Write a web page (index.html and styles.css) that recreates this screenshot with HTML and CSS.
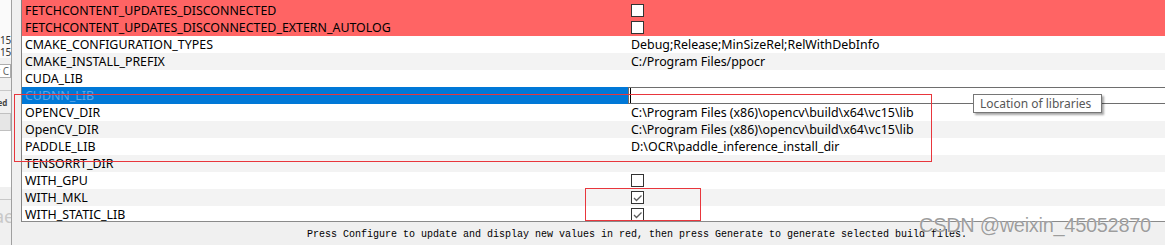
FILE: index.html
```html
<!DOCTYPE html>
<html lang="en">
<head>
  <meta charset="UTF-8">
  <title>CMake cache</title>
  <link rel="stylesheet" href="styles.css">
</head>
<body>
<div class="window">
  <div class="side">
    <div class="frag light">a</div>
    <div class="frag spacer"></div>
    <div class="frag dark">vc15</div>
    <div class="frag dark">vc15</div>
    <div class="frag boxed">or C</div>
    <div class="frag rule"></div>
    <div class="frag small">ted</div>
    <div class="frag button"></div>
    <div class="frag blank"></div>
    <div class="frag rule"></div>
    <div class="frag ghost">ae</div>
  </div>
  <div class="main">
    <div class="cache">
      <div class="row red stub"></div>
      <div class="row red"><span class="name">FETCHCONTENT_UPDATES_DISCONNECTED</span><span class="value"><i class="check"></i></span></div>
      <div class="row red"><span class="name">FETCHCONTENT_UPDATES_DISCONNECTED_EXTERN_AUTOLOG</span><span class="value"><i class="check"></i></span></div>
      <div class="row"><span class="name">CMAKE_CONFIGURATION_TYPES</span><span class="value">Debug;Release;MinSizeRel;RelWithDebInfo</span></div>
      <div class="row alt"><span class="name">CMAKE_INSTALL_PREFIX</span><span class="value">C:/Program Files/ppocr</span></div>
      <div class="row"><span class="name">CUDA_LIB</span><span class="value"></span></div>
      <div class="row selected"><span class="name">CUDNN_LIB</span><span class="value"><span class="edit"><i class="caret"></i></span></span></div>
      <div class="row"><span class="name">OPENCV_DIR</span><span class="value">C:\Program Files (x86)\opencv\build\x64\vc15\lib</span></div>
      <div class="row alt"><span class="name">OpenCV_DIR</span><span class="value">C:\Program Files (x86)\opencv\build\x64\vc15\lib</span></div>
      <div class="row"><span class="name">PADDLE_LIB</span><span class="value">D:\OCR\paddle_inference_install_dir</span></div>
      <div class="row alt"><span class="name">TENSORRT_DIR</span><span class="value"></span></div>
      <div class="row"><span class="name">WITH_GPU</span><span class="value"><i class="check"></i></span></div>
      <div class="row alt"><span class="name">WITH_MKL</span><span class="value"><i class="check on"><svg width="11" height="11" viewBox="0 0 11 11"><polyline points="2,6 4.5,8.5 9.5,3.5" fill="none" stroke="#5c5c5c" stroke-width="1.3"/></svg></i></span></div>
      <div class="row"><span class="name">WITH_STATIC_LIB</span><span class="value"><i class="check on"><svg width="11" height="11" viewBox="0 0 11 11"><polyline points="2,6 4.5,8.5 9.5,3.5" fill="none" stroke="#5c5c5c" stroke-width="1.3"/></svg></i></span></div>
    </div>
    <div class="status">Press Configure to update and display new values in red, then press Generate to generate selected build files.</div>
  </div>
</div>

<div class="tip">Location of libraries</div>
<div class="mark mark-paths"></div>
<div class="mark mark-bools"></div>
<div class="watermark">CSDN @weixin_45052870</div>
</body>
</html>
```

FILE: styles.css
```css
body {
  margin: 0;
  background: #f0f0f0;
  font-family: "Noto Sans", "Liberation Sans", sans-serif;
  font-size: 12.4px;
  color: #000;
  width: 1165px;
  height: 245px;
  overflow: hidden;
  position: relative;
}
.window {
  display: flex;
  height: 245px;
}
.side {
  width: 11px;
  flex: none;
  border-right: 1px solid #a0a0a0;
  overflow: hidden;
  background: #f0f0f0;
}
.frag {
  white-space: nowrap;
  font-size: 10px;
  line-height: 12px;
  height: 12px;
  text-indent: -10px;
  color: #333;
}
.frag.light {
  color: #999;
  background: #fafafa;
  height: 18px;
}
.frag.spacer {
  height: 16px;
  background: #fafafa;
}
.frag.dark {
  background: #fafafa;
}
.frag.boxed {
  margin-top: 6px;
  border: 1px solid #adadad;
  border-left: none;
  background: #fff;
  color: #666;
}
.frag.rule {
  height: 0;
  border-top: 1px solid #c8c8c8;
  margin: 12px 0 6px;
}
.frag.small {
  font-size: 8px;
  font-weight: bold;
  color: #444;
  text-indent: -6px;
}
.frag.button {
  height: 16px;
  margin-top: 4px;
  border: 1px solid #c0c0c0;
  border-left: none;
  background: #e6e6e6;
}
.frag.blank {
  height: 56px;
  background: #fff;
}
.frag.ghost {
  font-size: 18px;
  line-height: 20px;
  height: 20px;
  color: #c8c8c8;
  text-indent: -6px;
}
.main {
  flex: 1;
  margin-left: 9px;
  min-width: 0;
}
.cache {
  height: 222px;
  overflow: hidden;
  border-left: 1px solid #828282;
  border-bottom: 1px solid #8a8a8a;
  box-sizing: border-box;
  background: #fff;
}
.row {
  display: grid;
  grid-template-columns: 606px 1fr;
  height: 17px;
  line-height: 17px;
  background: #fff;
  white-space: nowrap;
}
.row.alt {
  background: #f3f3f3;
}
.row.red {
  background: #ff6464;
}
.row.stub {
  height: 2px;
}
.name {
  padding-left: 3px;
  overflow: hidden;
}
.value {
  padding-left: 3px;
  display: flex;
  align-items: center;
  overflow: hidden;
}
.row.selected .name {
  background: #0078d7;
  color: #5ba6e8;
}
.row.selected .value {
  padding-left: 0;
}
.edit {
  display: flex;
  align-items: center;
  flex: none;
  width: calc(100% + 40px);
  height: 17px;
  box-sizing: border-box;
  border: 1px solid #6e6e6e;
  background: #fff;
}
.caret {
  display: block;
  width: 1px;
  height: 15px;
  margin-left: 1px;
  background: #000;
}
.check {
  display: block;
  width: 13px;
  height: 13px;
  box-sizing: border-box;
  border: 1px solid #333;
  background: #fff;
}
.check svg {
  display: block;
}
.status {
  padding: 3px 0 0 286px;
  font-family: "Liberation Mono", monospace;
  font-size: 10px;
  line-height: 20px;
  white-space: nowrap;
}
.tip {
  position: absolute;
  left: 973px;
  top: 94px;
  width: 129px;
  height: 19px;
  box-sizing: border-box;
  border: 1px solid #767676;
  background: #fff;
  color: #575757;
  font-size: 12px;
  line-height: 17px;
  padding-left: 6px;
  box-shadow: 2px 2px 2px rgba(0, 0, 0, 0.35);
}
.mark {
  position: absolute;
  border: 1px solid #e8363c;
  box-sizing: border-box;
}
.mark-paths {
  left: 14px;
  top: 94px;
  width: 918px;
  height: 68px;
}
.mark-bools {
  left: 585px;
  top: 188px;
  width: 116px;
  height: 33px;
}
.watermark {
  position: absolute;
  left: 919px;
  top: 215px;
  font-family: "Liberation Sans", sans-serif;
  font-size: 20px;
  line-height: 20px;
  letter-spacing: -0.3px;
  color: rgba(140, 140, 140, 0.85);
  text-shadow: 0 0 1px #fff;
  white-space: nowrap;
}
```
